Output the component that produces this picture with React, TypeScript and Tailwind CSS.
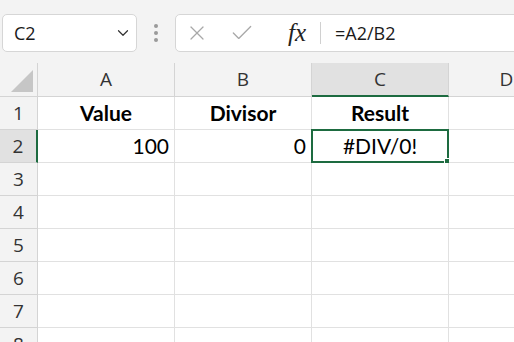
import { ChevronDown, X, Check } from 'lucide-react';

const cols = ['A', 'B', 'C', 'D'];
const rows = [1, 2, 3, 4, 5, 6, 7, 8];

const cellFont = { fontFamily: 'Lato, "Open Sans", sans-serif' };
const uiFont = { fontFamily: '"Open Sans", "Noto Sans", sans-serif' };

function Cell({ row, col }: { row: number; col: string }) {
  let content: React.ReactNode = null;
  let align = 'justify-center';
  if (row === 1) {
    const headers: Record<string, string> = { A: 'Value', B: 'Divisor', C: 'Result' };
    content = <span className="font-bold">{headers[col]}</span>;
  }
  if (row === 2 && col === 'A') {
    content = '100';
    align = 'justify-end pr-[5px]';
  }
  if (row === 2 && col === 'B') {
    content = '0';
    align = 'justify-end pr-[5px]';
  }
  if (row === 2 && col === 'C') content = '#DIV/0!';

  const selected = row === 2 && col === 'C';
  return (
    <div
      className={`relative flex items-center ${align} border-r border-b border-[#e1e1e1] bg-white text-[21px] text-black`}
      style={cellFont}
    >
      {content}
      {selected && (
        <div className="absolute -left-px -top-px -right-px -bottom-px border-2 border-[#1d6b40]">
          <div className="absolute -right-[4px] -bottom-[4px] h-[6px] w-[6px] bg-[#1d6b40] outline outline-1 outline-white" />
        </div>
      )}
    </div>
  );
}

export default function App() {
  return (
    <div className="h-[342px] w-[514px] overflow-hidden bg-white" style={uiFont}>
      {/* toolbar */}
      <div className="flex h-[63px] items-start bg-[#f3f3f3] pt-[14px]">
        <div className="ml-[2px] flex h-[38px] w-[135px] items-center justify-between rounded-[5px] border border-[#d6d6d6] bg-white pl-[11px] pr-[4px]">
          <span className="text-[18px] text-[#1a1a1a]">C2</span>
          <ChevronDown size={18} strokeWidth={1.6} className="text-[#333]" />
        </div>
        <div className="flex h-[38px] w-[38px] flex-col items-center justify-center gap-[3px]">
          <span className="h-[4px] w-[4px] rounded-full bg-[#9a9a9a]" />
          <span className="h-[4px] w-[4px] rounded-full bg-[#9a9a9a]" />
          <span className="h-[4px] w-[4px] rounded-full bg-[#9a9a9a]" />
        </div>
        <div className="-mr-4 flex h-[38px] flex-1 items-center rounded-l-[5px] border border-[#d6d6d6] bg-white">
          <X size={24} strokeWidth={1.2} className="ml-[9px] text-[#a8a8a8]" />
          <Check size={26} strokeWidth={1.2} className="ml-[20px] text-[#a8a8a8]" />
          <span
            className="ml-[33px] text-[25px] italic text-[#222]"
            style={{ fontFamily: '"Liberation Serif", "DejaVu Serif", serif' }}
          >
            fx
          </span>
          <span className="ml-[14px] h-[22px] w-px bg-[#d0d0d0]" />
          <span className="ml-[14px] text-[18px] text-[#1a1a1a]">=A2/B2</span>
        </div>
      </div>

      {/* grid */}
      <div className="grid grid-cols-[38px_137px_137px_137px_116px] grid-rows-[34px_repeat(8,33px)]">
        <div className="relative border-r border-b border-[#d4d4d4] bg-[#f3f3f3]">
          <div
            className="absolute right-[4px] bottom-[4px] h-[22px] w-[22px] bg-[#c6c6c6]"
            style={{ clipPath: 'polygon(100% 0, 100% 100%, 0 100%)' }}
          />
        </div>
        {cols.map((c) => (
          <div
            key={c}
            className={`flex items-center justify-center border-r text-[19px] text-[#333] ${
              c === 'C'
                ? 'border-b-2 border-r-[#d4d4d4] border-b-[#1d6b40] bg-[#e1e1e1]'
                : 'border-b border-[#d4d4d4] bg-[#f3f3f3]'
            }`}
          >
            {c}
          </div>
        ))}
        {rows.map((r) => (
          <>
            <div
              key={`h${r}`}
              className={`flex items-center justify-center border-b text-[19px] text-[#333] ${
                r === 2
                  ? 'border-r-2 border-r-[#1d6b40] border-b-[#d4d4d4] bg-[#e1e1e1]'
                  : 'border-r border-[#d4d4d4] bg-[#f3f3f3]'
              }`}
            >
              {r}
            </div>
            {cols.map((c) => (
              <Cell key={`${c}${r}`} row={r} col={c} />
            ))}
          </>
        ))}
      </div>
    </div>
  );
}
